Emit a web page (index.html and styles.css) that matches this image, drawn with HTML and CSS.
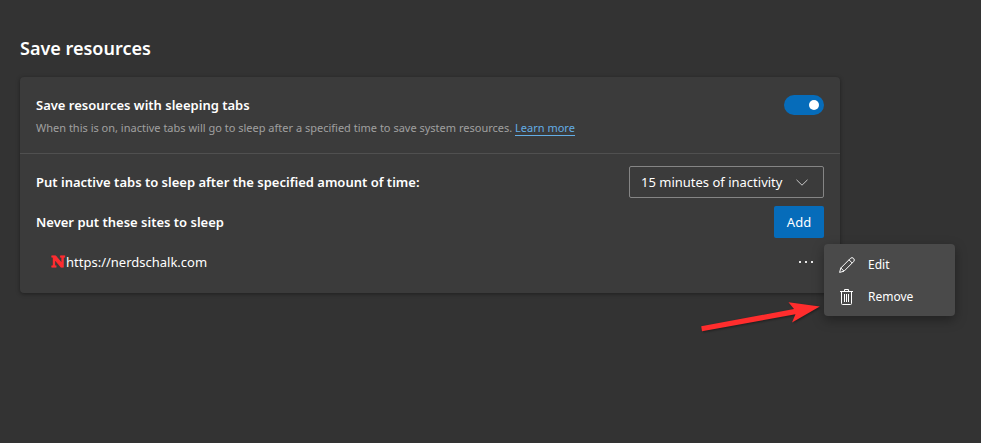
FILE: index.html
```html
<!DOCTYPE html>
<html lang="en">
<head>
    <meta charset="UTF-8">
    <meta name="viewport" content="width=device-width, initial-scale=1.0">
    <title>Settings</title>
    <link rel="stylesheet" href="styles.css">
</head>
<body>
    <main class="container">
        <h1>Save resources</h1>

        <div class="card">
            <div class="card-header">
                <div class="card-text">
                    <label class="title" for="sleepingTabs">Save resources with sleeping tabs</label>
                    <p class="description">When this is on, inactive tabs will go to sleep after a specified time to save system resources. <a href="#">Learn more</a></p>
                </div>
                <input type="checkbox" role="switch" id="sleepingTabs" class="toggle" checked>
            </div>

            <div class="card-body">
                <div class="row">
                    <label class="title" for="sleepAfter">Put inactive tabs to sleep after the specified amount of time:</label>
                    <div class="select-wrap">
                        <select id="sleepAfter">
                            <option>15 minutes of inactivity</option>
                            <option>30 minutes of inactivity</option>
                            <option>1 hour of inactivity</option>
                        </select>
                        <svg class="chevron" width="12" height="7" viewBox="0 0 12 7"><path d="M.5.8 6 6.2 11.5.8"/></svg>
                    </div>
                </div>

                <div class="row">
                    <h2 class="title">Never put these sites to sleep</h2>
                    <button type="button" class="add-btn">Add</button>
                </div>

                <div class="row site">
                    <span class="favicon" aria-hidden="true">N</span>
                    <span class="site-url">https://nerdschalk.com</span>
                    <button type="button" class="more-btn" aria-label="More actions">
                        <svg width="16" height="2" viewBox="0 0 16 2"><path d="M1 0h2v2H1zM7 0h2v2H7zM13 0h2v2h-2z"/></svg>
                    </button>

                    <div class="menu">
                        <button type="button" class="menu-item">
                            <svg width="16" height="16" viewBox="0 0 16 16">
                                <path d="M.6 15.4 1.8 11 11.4 1.4a2.2 2.2 0 0 1 3.2 3.2L5 14.2z"/>
                                <path d="M10 2.8 13.2 6M1.8 11 5 14.2"/>
                            </svg>
                            Edit
                        </button>
                        <button type="button" class="menu-item">
                            <svg width="16" height="16" viewBox="0 0 16 16">
                                <path d="M1 2.5h13M5.5 2.5v-2h4v2M2.5 2.5v12a1 1 0 0 0 1 1h8a1 1 0 0 0 1-1v-12M5.5 5v8M7.5 5v8M9.5 5v8"/>
                            </svg>
                            Remove
                        </button>
                    </div>

                    <svg class="arrow" width="124" height="34" viewBox="0 0 124 34">
                        <path d="M1.2 26.3 94 9 88.5 2.2 119.8 6.4 92 22.4 95.5 14.3 2 31.3z"/>
                    </svg>
                </div>
            </div>
        </div>
    </main>
</body>
</html>
```
FILE: styles.css
```css
* {
    box-sizing: border-box;
    margin: 0;
    padding: 0;
}

body {
    min-height: 100vh;
    background-color: #333;
    color: #fff;
    font-family: 'Segoe UI', 'Noto Sans', 'Open Sans', sans-serif;
    font-size: 13px;
    line-height: 20px;
}

button,
select {
    font: inherit;
    color: inherit;
    cursor: pointer;
}

.container {
    max-width: 860px;
    padding: 36px 20px 64px;
}

h1 {
    font-size: 18px;
    font-weight: 600;
    line-height: 24px;
    margin-bottom: 17px;
}

.card {
    background-color: #3b3b3b;
    border-radius: 4px;
    box-shadow: 0 1px 4px rgba(0, 0, 0, 0.4);
}

.card-header {
    display: flex;
    justify-content: space-between;
    align-items: flex-start;
    padding: 18px 16px 17px;
    border-bottom: 1px solid #505050;
}

.title {
    display: block;
    font-size: 13px;
    font-weight: 600;
}

.description {
    color: #a0a0a0;
    font-size: 11px;
    line-height: 16px;
    margin-top: 5px;
}

.description a {
    color: #63ade5;
    text-decoration: none;
    border-bottom: 1px solid #63ade5;
}

.toggle {
    appearance: none;
    flex: none;
    display: flex;
    align-items: center;
    width: 40px;
    height: 20px;
    padding: 0 5px;
    border-radius: 10px;
    background-color: #707070;
    cursor: pointer;
}

.toggle::before {
    content: '';
    width: 10px;
    height: 10px;
    border-radius: 50%;
    background-color: #fff;
}

.toggle:checked {
    justify-content: flex-end;
    background-color: #066cba;
}

.card-body {
    padding: 8px 16px 11px;
}

.row {
    display: flex;
    align-items: center;
    justify-content: space-between;
    min-height: 40px;
}

.select-wrap {
    display: grid;
    align-items: center;
}

.select-wrap > * {
    grid-area: 1 / 1;
}

select {
    appearance: none;
    width: 195px;
    height: 32px;
    padding: 0 32px 0 11px;
    border: 1px solid #858585;
    border-radius: 2px;
    background-color: transparent;
}

option {
    background-color: #3b3b3b;
}

.chevron {
    justify-self: end;
    margin-right: 16px;
    fill: none;
    stroke: #c8c8c8;
    pointer-events: none;
}

.add-btn {
    width: 50px;
    height: 32px;
    border: none;
    border-radius: 2px;
    background-color: #066cba;
}

.site {
    position: relative;
    padding-left: 15px;
}

.favicon {
    width: 15px;
    color: #ff2b2f;
    font-family: 'DejaVu Serif', serif;
    font-size: 15px;
    font-weight: bold;
    -webkit-text-stroke: 1px #ff2b2f;
}

.more-btn {
    display: grid;
    place-items: center;
    width: 36px;
    height: 32px;
    margin-left: auto;
    border: none;
    background: none;
}

.more-btn svg {
    fill: #e8e8e8;
}

.menu {
    position: absolute;
    top: 2px;
    left: 100%;
    width: 131px;
    padding: 5px 0 3px;
    border-radius: 4px;
    background-color: #4a4a4a;
    box-shadow: 0 4px 12px rgba(0, 0, 0, 0.35);
}

.menu-item {
    display: flex;
    align-items: center;
    gap: 13px;
    width: 100%;
    height: 32px;
    padding: 0 15px;
    border: none;
    background: none;
    font-size: 12px;
}

.menu-item:hover {
    background-color: #5a5a5a;
}

.menu-item svg {
    fill: none;
    stroke: #fff;
}

.arrow {
    position: absolute;
    top: 58px;
    right: 0;
    fill: #ff2d2d;
    filter: drop-shadow(1px 1px 1px rgba(0, 0, 0, 0.4));
    pointer-events: none;
}
```
